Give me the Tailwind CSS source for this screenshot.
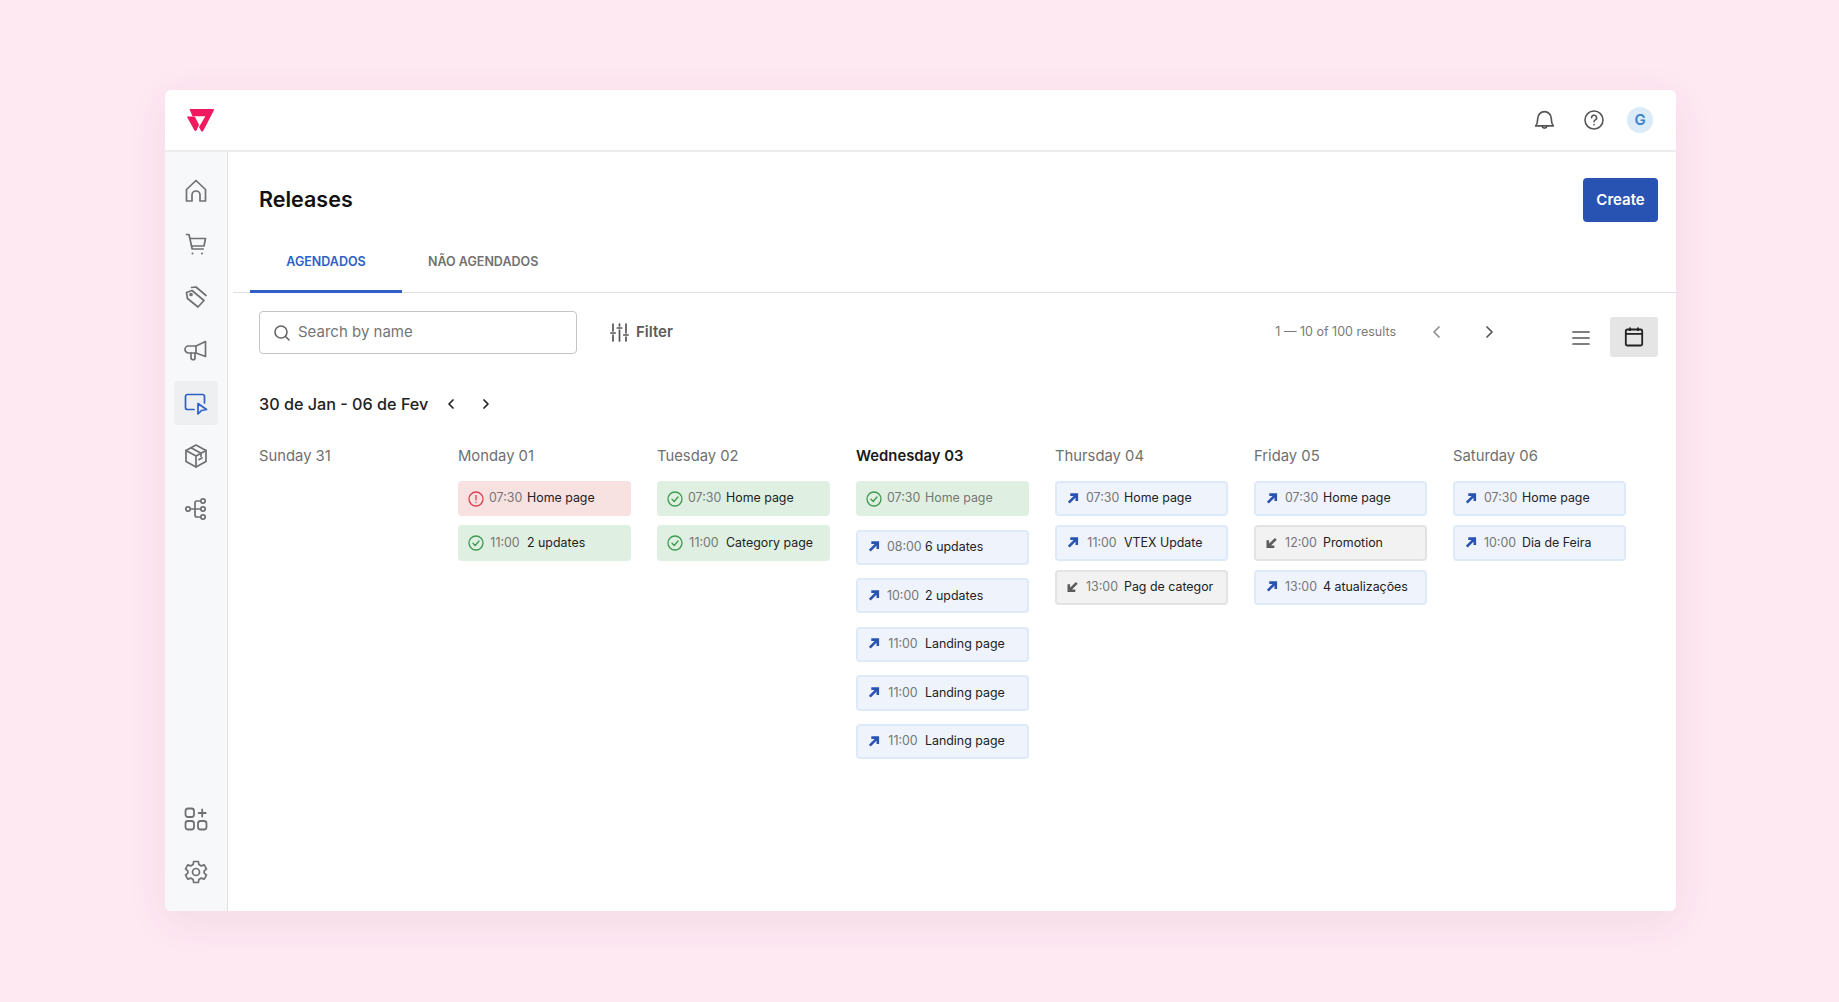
<!DOCTYPE html>
<html lang="en">
  <head>
    <meta charset="UTF-8" />
    <meta name="viewport" content="width=device-width, initial-scale=1.0" />
    <title>Releases</title>
    <script src="https://cdn.jsdelivr.net/npm/@tailwindcss/browser@4"></script>
  </head>
  <body class="bg-[#fee8f2] font-['Inter',sans-serif] text-[#1f1f1f] h-[1002px] overflow-hidden pt-[90px] pl-[165px]">
    <div class="w-[1511px] h-[821px] bg-white rounded-[6px] overflow-hidden shadow-[0_10px_40px_rgba(120,60,90,0.08)] flex flex-col">
      <header class="h-[62px] shrink-0 border-b-2 border-[#ececec] flex items-center pl-[22px] pr-[23px]">
        <svg width="27" height="23" viewBox="0 0 27 23" class="shrink-0">
          <path fill="#f0195f" d="M3.2 0H25.8C26.8 0 27.2.8 26.8 1.6L16.4 21.6C15.8 22.9 14.4 22.9 13.800 21.6L12 18 18.400 7.2H5.500L3 1.6C2.600.8 2.500 0 3.2 0Z" />
          <path fill="#f0195f" d="M.4 7.400H7.800L12 15.800 9.800 21C9.200 22.200 7.900 22.200 7.200 21L.3 8.400C0 7.800 0 7.400.4 7.400Z" />
        </svg>
        <div class="ml-auto flex items-center">
          <svg width="25" height="25" viewBox="0 0 24 24" fill="none" stroke="#555" stroke-width="1.600" stroke-linejoin="round" stroke-linecap="round"><path d="M5.500 10a6.500 6.500 0 0 1 13 0c0 4.500 1 6 2 7.200H3.500C4.500 16 5.500 14.500 5.500 10Z" /><path d="M9.600 17.500a2.500 2.500 0 0 0 4.800 0" /></svg>
          <svg class="ml-[25px]" width="24" height="24" viewBox="0 0 24 24" fill="none" stroke="#555" stroke-width="1.600" stroke-linecap="round"><circle cx="12" cy="12" r="9" /><path d="M9.600 9.700a2.500 2.500 0 1 1 3.700 2.200c-.8.500-1.300 1-1.300 1.900" /><path d="M12 16.600v.1" /></svg>
          <div class="ml-[21px] w-[26px] h-[26px] rounded-full bg-[#dcebf8] text-[#3a82c8] text-[15px] font-semibold flex items-center justify-center">G</div>
        </div>
      </header>

      <div class="flex flex-1 min-h-0">
        <nav class="w-[63px] shrink-0 bg-[#f6f8fa] border-r border-[#e0e0e0] flex flex-col items-center pt-[17px] pb-[17px] gap-[9px]">
          <a class="w-[44px] h-[44px] flex items-center justify-center">
            <svg width="24" height="24" viewBox="0 0 24 24" fill="none" stroke="#707070" stroke-width="1.700" stroke-linejoin="round"><path d="M2.500 22V10.500L12 1.500l9.500 9V22h-5.500v-6a4 4 0 0 0-8 0v6Z" /></svg>
          </a>
          <a class="w-[44px] h-[44px] flex items-center justify-center">
            <svg width="24" height="24" viewBox="0 0 24 24" fill="none" stroke="#707070" stroke-width="1.700" stroke-linecap="round" stroke-linejoin="round"><path d="M2.500 2.500H5l3.200 14.500h11" /><path d="M6 6.500h15.500l-1.500 7.500H7.500" /><path d="M8.500 21.500v.1M18 21.500v.1" stroke-width="2" /></svg>
          </a>
          <a class="w-[44px] h-[44px] flex items-center justify-center">
            <svg width="24" height="24" viewBox="0 0 24 24" fill="none" stroke="#707070" stroke-width="1.700" stroke-linejoin="round" stroke-linecap="round"><path d="M2.500 7.500 8 5.500 20 15.500 14 22 3.500 13.500Z" /><path d="M7.500 2.500 12 2l10 8.500" /><circle cx="7" cy="9.500" r="1" /></svg>
          </a>
          <a class="w-[44px] h-[44px] flex items-center justify-center">
            <svg width="24" height="24" viewBox="0 0 24 24" fill="none" stroke="#707070" stroke-width="1.700" stroke-linejoin="round" stroke-linecap="round"><path d="M21.500 3.500 12 8H4.500a2.500 2.500 0 0 0 0 7H12l9.500 3.500Z" /><path d="M12 8v7" /><path d="M7 15v5a1.700 1.700 0 0 0 1.700 1.700h.6a1.700 1.700 0 0 0 1.700-1.700v-5" /></svg>
          </a>
          <a class="w-[44px] h-[44px] rounded-[4px] bg-[#eeeff0] flex items-center justify-center">
            <svg width="24" height="24" viewBox="0 0 24 24" fill="none" stroke="#2f5fc7" stroke-width="1.700" stroke-linejoin="round" stroke-linecap="round"><path d="M10 18.500H3.500a2 2 0 0 1-2-2v-11a2 2 0 0 1 2-2h15a2 2 0 0 1 2 2V12" /><path d="M14 12.500 22.500 18.500 17.500 19.500 14 23Z" /></svg>
          </a>
          <a class="w-[44px] h-[44px] flex items-center justify-center">
            <svg width="24" height="24" viewBox="0 0 24 24" fill="none" stroke="#707070" stroke-width="1.700" stroke-linejoin="round" stroke-linecap="round"><path d="M12 1 22 6.500v11L12 23 2 17.500v-11Z" /><path d="M2 6.500 12 12l10-5.500M12 12v11M7 3.800l10 5.500v3" /><path d="M15 15.500l3-1.500" /></svg>
          </a>
          <a class="w-[44px] h-[44px] flex items-center justify-center">
            <svg width="24" height="24" viewBox="0 0 24 24" fill="none" stroke="#707070" stroke-width="1.700"><circle cx="4" cy="12" r="2.200" /><circle cx="19" cy="4" r="2.200" /><circle cx="19" cy="12" r="2.200" /><circle cx="19" cy="20" r="2.200" /><path d="M6.200 12h10.600M16.800 4H13a2 2 0 0 0-2 2v12a2 2 0 0 0 2 2h3.800" /></svg>
          </a>
          <a class="mt-auto w-[44px] h-[44px] flex items-center justify-center">
            <svg width="24" height="24" viewBox="0 0 24 24" fill="none" stroke="#707070" stroke-width="1.800" stroke-linecap="round"><rect x="1.500" y="1.500" width="8.500" height="8.500" rx="2.500" /><rect x="1.500" y="14" width="8.500" height="8.500" rx="2.500" /><rect x="14" y="14" width="8.500" height="8.500" rx="2.500" /><path d="M18.200 2.500v7M14.700 6h7" /></svg>
          </a>
          <a class="w-[44px] h-[44px] flex items-center justify-center">
            <svg width="24" height="24" viewBox="0 0 24 24" fill="none" stroke="#707070" stroke-width="1.700" stroke-linejoin="round"><circle cx="12" cy="12" r="3.500" /><path d="M9.700 1.500h4.600l.6 3 2.400 1.400 2.900-1 2.300 4-2.300 2v2.200l2.300 2-2.300 4-2.900-1-2.400 1.400-.6 3H9.700l-.6-3-2.400-1.400-2.900 1-2.300-4 2.300-2v-2.200l-2.300-2 2.300-4 2.900 1 2.400-1.400Z" /></svg>
          </a>
        </nav>

        <main class="flex-1 min-w-0">
          <div class="flex items-center justify-between pt-[26px] pl-[31px] pr-[18px]">
            <h1 class="text-[21.500px] leading-[32px] -translate-y-px font-semibold text-[#111]">Releases</h1>
            <button class="w-[75px] h-[44px] rounded-[4px] bg-[#2953b2] text-white text-[15px] font-semibold">Create</button>
          </div>

          <div class="ml-[5px] mt-[27px] h-[44px] border-b border-[#dedede] flex pl-[17px] text-[12.500px] font-semibold">
            <div class="w-[152px] h-[44px] border-b-[3px] border-[#2f5fc7] text-[#2f5fc7] flex justify-center pt-[4px]">AGENDADOS</div>
            <div class="ml-[26px] text-[#727272] pt-[4px]">NÃO AGENDADOS</div>
          </div>

          <div class="flex items-start pl-[31px] pr-[18px] mt-[18px] h-[46px]">
            <div class="w-[318px] h-[43px] border-[1.500px] border-[#c4c4c4] rounded-[4px] flex items-center pl-[13px]">
              <svg width="18" height="18" viewBox="0 0 18 18" fill="none" stroke="#666" stroke-width="1.600" stroke-linecap="round"><circle cx="8" cy="8" r="6" /><path d="m12.500 12.500 3.500 3.500" /></svg>
              <span class="ml-[7px] text-[15px] text-[#757575]">Search by name</span>
            </div>
            <div class="ml-[33px] h-[43px] flex items-center">
              <svg width="19" height="19" viewBox="0 0 19 19" fill="none" stroke="#555" stroke-width="1.700" stroke-linecap="round"><path d="M3 1v7M3 12v6M9.500 1v2M9.500 7v11M16 1v9M16 14v4M.8 10h4.400M7.300 5h4.400M13.800 12h4.400" /></svg>
              <span class="ml-[7px] text-[15px] font-semibold text-[#5c5c5c]">Filter</span>
            </div>
            <span class="ml-auto mt-[12px] text-[12.500px] leading-[18px] text-[#7a7a7a]">1 — 10 of 100 results</span>
            <svg class="ml-[33px] mt-[12px]" width="16" height="18" viewBox="0 0 16 18" fill="none" stroke="#8f8f8f" stroke-width="1.700" stroke-linecap="round" stroke-linejoin="round"><path d="M10 4 5 9l5 5" /></svg>
            <svg class="ml-[36px] mt-[12px]" width="16" height="18" viewBox="0 0 16 18" fill="none" stroke="#555" stroke-width="1.700" stroke-linecap="round" stroke-linejoin="round"><path d="m6 4 5 5-5 5" /></svg>
            <svg class="ml-[72px] mt-[15px]" width="24" height="24" viewBox="0 0 24 24" fill="none" stroke="#555" stroke-width="1.700" stroke-linecap="round"><path d="M4 6h16M4 12h16M4 18h16" /></svg>
            <div class="ml-[17px] mt-[6px] w-[48px] h-[40px] rounded-[3px] bg-[#e5e5e5] flex items-center justify-center">
              <svg width="22" height="22" viewBox="0 0 22 22" fill="none" stroke="#222" stroke-width="1.800"><rect x="2.800" y="3.500" width="16.400" height="16" rx="1.500" /><path d="M2.800 7.800h16.400M7 1.500v3.500M15 1.500v3.500" /></svg>
            </div>
          </div>

          <div class="flex items-center pl-[31px] mt-[33px] h-[28px]">
            <span class="text-[16.200px] font-medium text-[#222]">30 de Jan - 06 de Fev</span>
            <svg class="ml-[15px]" width="16" height="18" viewBox="0 0 16 18" fill="none" stroke="#222" stroke-width="1.700" stroke-linecap="round" stroke-linejoin="round"><path d="M10 5 6 9l4 4" /></svg>
            <svg class="ml-[19px]" width="16" height="18" viewBox="0 0 16 18" fill="none" stroke="#222" stroke-width="1.700" stroke-linecap="round" stroke-linejoin="round"><path d="m6 5 4 4-4 4" /></svg>
          </div>

          <div id="week" class="flex gap-x-[26.500px] pl-[31px] mt-[29px]"></div>
        </main>
      </div>
    </div>

    <script>
      const icons = {
        ok: '<svg width="16" height="16" viewBox="0 0 16 16" fill="none" stroke="#3d9a50" stroke-width="1.300" stroke-linecap="round" stroke-linejoin="round"><circle cx="8" cy="8" r="7" /><path d="m5 8.300 2.200 2.200L11 6" /></svg>',
        err: '<svg width="16" height="16" viewBox="0 0 16 16" fill="none" stroke="#dc3f4e" stroke-width="1.300" stroke-linecap="round"><circle cx="8" cy="8" r="7" /><path d="M8 4.300v4.600M8 11.500v.1" /></svg>',
        up: '<svg width="16" height="16" viewBox="0 0 16 16" fill="none" stroke="#2953b2" stroke-width="2.600"><path d="M5.300 3.600h6.500v6.500M11.500 3.900 3.800 11.600" /></svg>',
        down: '<svg width="16" height="16" viewBox="0 0 16 16" fill="none" stroke="#5c5c5c" stroke-width="2.600"><path d="M10.300 11.800H3.800V5.300M4.100 11.500 11.800 3.800" /></svg>'
      }

      const styles = {
        ok: 'bg-[#dff0e2] rounded-[4px]',
        err: 'bg-[#f7e1e1] rounded-[4px]',
        up: 'bg-[#eff3fc] border-2 border-[#dfeaf8] rounded-[4px]',
        down: 'bg-[#f2f2f2] border-2 border-[#e3e3e3] rounded-[4px]'
      }

      const week = [
        { label: 'Sunday 31', items: [] },
        { label: 'Monday 01', items: [['err', '07:30', 'Home page'], ['ok', '11:00', '2 updates']] },
        { label: 'Tuesday 02', items: [['ok', '07:30', 'Home page'], ['ok', '11:00', 'Category page']] },
        { label: 'Wednesday 03', today: true, items: [['ok', '07:30', 'Home page', true], ['up', '08:00', '6 updates'], ['up', '10:00', '2 updates'], ['up', '11:00', 'Landing page'], ['up', '11:00', 'Landing page'], ['up', '11:00', 'Landing page']] },
        { label: 'Thursday 04', items: [['up', '07:30', 'Home page'], ['up', '11:00', 'VTEX Update'], ['down', '13:00', 'Pag de categor']] },
        { label: 'Friday 05', items: [['up', '07:30', 'Home page'], ['down', '12:00', 'Promotion'], ['up', '13:00', '4 atualizações']] },
        { label: 'Saturday 06', items: [['up', '07:30', 'Home page'], ['up', '10:00', 'Dia de Feira']] }
      ]

      document.querySelector('#week').innerHTML = week.map(day => `
        <div class="w-[172.500px] shrink-0">
          <div class="text-[14.800px] leading-[18px] ${day.today ? 'font-semibold text-[#1a1a1a]' : 'text-[#6f6f6f]'}">${day.label}</div>
          <div class="mt-[16px] flex flex-col ${day.today ? 'gap-[13.300px]' : 'gap-[9px]'}">
            ${day.items.map(([kind, time, name, done]) => `
              <div class="h-[35.300px] flex items-center text-[12.400px] whitespace-nowrap ${kind === 'ok' || kind === 'err' ? 'pl-[10px]' : 'pl-[8px]'} ${styles[kind]}">
                <span class="w-[16px] h-[16px] shrink-0">${icons[kind]}</span>
                <span class="ml-[5px] w-[32px] text-center text-[#767676]">${time}</span>
                <span class="ml-[6px] ${done ? 'text-[#767676]' : 'text-[#222]'}">${name}</span>
              </div>`).join('')}
          </div>
        </div>`).join('')
    </script>
  </body>
</html>
